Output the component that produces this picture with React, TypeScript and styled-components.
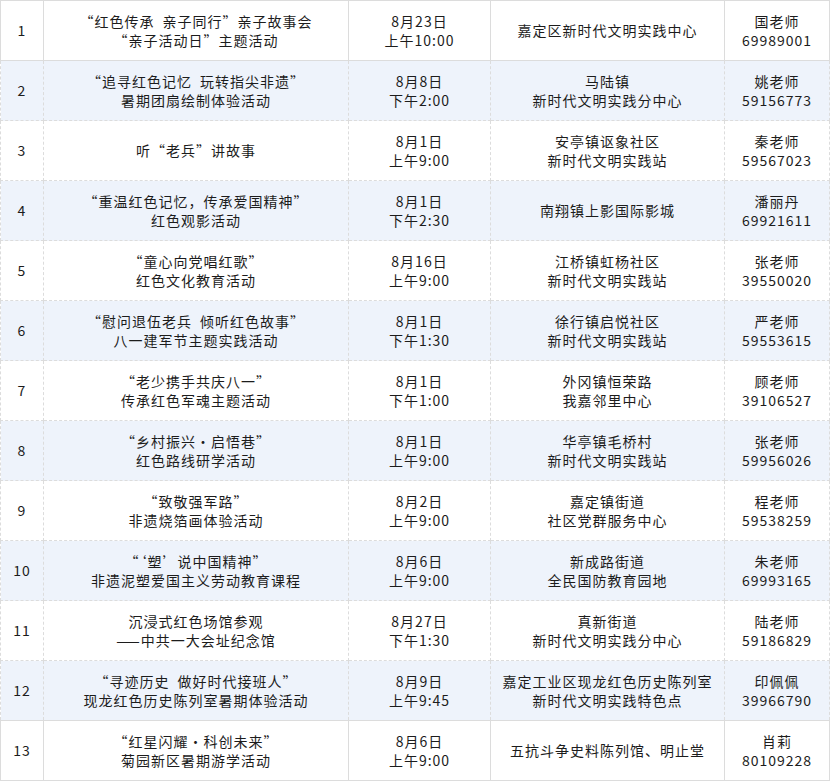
import styled, { createGlobalStyle } from "styled-components";

const GlobalStyle = createGlobalStyle`
  html, body {
    margin: 0;
    padding: 0;
    background: #ffffff;
  }
`;

const Table = styled.table`
  width: 829px;
  border-collapse: collapse;
  table-layout: fixed;
  font-family: "Noto Sans CJK SC", "Noto Sans", sans-serif;
  font-size: 14px;
  letter-spacing: 1px;
  color: #1c1c1c;
`;

const Col = styled.col<{ $w: number }>`
  width: ${(p) => p.$w}px;
`;

const Row = styled.tr<{ $alt: boolean }>`
  background: ${(p) => (p.$alt ? "#eef3fb" : "#ffffff")};
`;

const Cell = styled.td<{ $dashed: boolean }>`
  height: 59px;
  padding: 0 2px;
  border: 1px ${(p) => (p.$dashed ? "dashed" : "solid")} #dcdcdc;
  text-align: center;
  vertical-align: middle;
  line-height: 19px;
  white-space: nowrap;
`;

const Line = styled.div`
  display: block;
`;

// quotes and the middle dot are full width in the original table font
const Wide = styled.span`
  font-feature-settings: "fwid";
`;

type Activity = {
  title: string[];
  date: string[];
  place: string[];
  contact: string[];
};

const SP = "\u2002";

const activities: Activity[] = [
  {
    title: [`“红色传承${SP}亲子同行”亲子故事会`, "“亲子活动日”主题活动"],
    date: ["8月23日", "上午10:00"],
    place: ["嘉定区新时代文明实践中心"],
    contact: ["国老师", "69989001"],
  },
  {
    title: [`“追寻红色记忆${SP}玩转指尖非遗”`, "暑期团扇绘制体验活动"],
    date: ["8月8日", "下午2:00"],
    place: ["马陆镇", "新时代文明实践分中心"],
    contact: ["姚老师", "59156773"],
  },
  {
    title: ["听“老兵”讲故事"],
    date: ["8月1日", "上午9:00"],
    place: ["安亭镇讴象社区", "新时代文明实践站"],
    contact: ["秦老师", "59567023"],
  },
  {
    title: ["“重温红色记忆，传承爱国精神”", "红色观影活动"],
    date: ["8月1日", "下午2:30"],
    place: ["南翔镇上影国际影城"],
    contact: ["潘丽丹", "69921611"],
  },
  {
    title: ["“童心向党唱红歌”", "红色文化教育活动"],
    date: ["8月16日", "上午9:00"],
    place: ["江桥镇虹杨社区", "新时代文明实践站"],
    contact: ["张老师", "39550020"],
  },
  {
    title: [`“慰问退伍老兵${SP}倾听红色故事”`, "八一建军节主题实践活动"],
    date: ["8月1日", "下午1:30"],
    place: ["徐行镇启悦社区", "新时代文明实践站"],
    contact: ["严老师", "59553615"],
  },
  {
    title: ["“老少携手共庆八一”", "传承红色军魂主题活动"],
    date: ["8月1日", "下午1:00"],
    place: ["外冈镇恒荣路", "我嘉邻里中心"],
    contact: ["顾老师", "39106527"],
  },
  {
    title: ["“乡村振兴·启悟巷”", "红色路线研学活动"],
    date: ["8月1日", "上午9:00"],
    place: ["华亭镇毛桥村", "新时代文明实践站"],
    contact: ["张老师", "59956026"],
  },
  {
    title: ["“致敬强军路”", "非遗烧箔画体验活动"],
    date: ["8月2日", "上午9:00"],
    place: ["嘉定镇街道", "社区党群服务中心"],
    contact: ["程老师", "59538259"],
  },
  {
    title: ["“‘塑’说中国精神”", "非遗泥塑爱国主义劳动教育课程"],
    date: ["8月6日", "上午9:00"],
    place: ["新成路街道", "全民国防教育园地"],
    contact: ["朱老师", "69993165"],
  },
  {
    title: ["沉浸式红色场馆参观", "——中共一大会址纪念馆"],
    date: ["8月27日", "下午1:30"],
    place: ["真新街道", "新时代文明实践分中心"],
    contact: ["陆老师", "59186829"],
  },
  {
    title: [`“寻迹历史${SP}做好时代接班人”`, "现龙红色历史陈列室暑期体验活动"],
    date: ["8月9日", "上午9:45"],
    place: ["嘉定工业区现龙红色历史陈列室", "新时代文明实践特色点"],
    contact: ["印佩佩", "39966790"],
  },
  {
    title: ["“红星闪耀·科创未来”", "菊园新区暑期游学活动"],
    date: ["8月6日", "上午9:00"],
    place: ["五抗斗争史料陈列馆、明止堂"],
    contact: ["肖莉", "80109228"],
  },
];

const widths = [43, 305, 142, 234, 105];

const Text = ({ value }: { value: string }) => (
  <>
    {value.split(/([“”‘’·])/).map((part, i) =>
      i % 2 === 1 ? <Wide key={i}>{part}</Wide> : part
    )}
  </>
);

const Lines = ({ items }: { items: string[] }) => (
  <>
    {items.map((t) => (
      <Line key={t}>
        <Text value={t} />
      </Line>
    ))}
  </>
);

const App = () => {
  const last = activities.length - 1;
  return (
    <>
      <GlobalStyle />
      <Table>
        <colgroup>
          {widths.map((w, i) => (
            <Col key={i} $w={w} />
          ))}
        </colgroup>
        <tbody>
          {activities.map((a, i) => {
            const dashed = i > 0 && i < last;
            return (
              <Row key={i} $alt={i % 2 === 1}>
                <Cell $dashed={dashed}>{i + 1}</Cell>
                <Cell $dashed={dashed}>
                  <Lines items={a.title} />
                </Cell>
                <Cell $dashed={dashed}>
                  <Lines items={a.date} />
                </Cell>
                <Cell $dashed={dashed}>
                  <Lines items={a.place} />
                </Cell>
                <Cell $dashed={dashed}>
                  <Lines items={a.contact} />
                </Cell>
              </Row>
            );
          })}
        </tbody>
      </Table>
    </>
  );
};

export default App;
